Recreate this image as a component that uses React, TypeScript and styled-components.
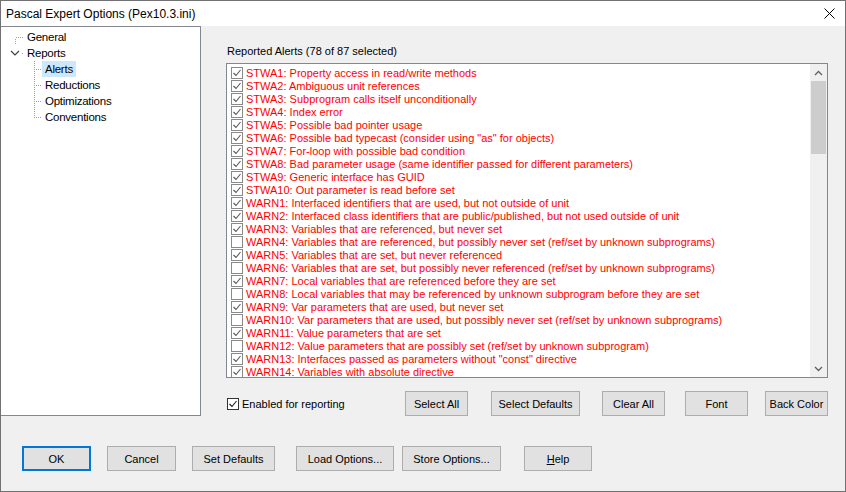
import React from "react";
import styled, { createGlobalStyle } from "styled-components";

const GlobalStyle = createGlobalStyle`
  html, body {
    margin: 0;
    padding: 0;
    background: #ffffff;
  }
  * {
    box-sizing: border-box;
  }
`;

const UI_FONT = `"Liberation Sans", Arial, sans-serif`;

const Window = styled.div`
  width: 846px;
  height: 492px;
  border: 1px solid #717171;
  background: #f0f0f0;
  display: flex;
  flex-direction: column;
  font-family: ${UI_FONT};
  font-size: 11px;
  color: #000;
  overflow: hidden;
`;

const TitleBar = styled.div`
  height: 25px;
  flex: none;
  background: #ffffff;
  display: flex;
  align-items: center;
  justify-content: space-between;
  padding-left: 5px;
  font-size: 12px;
`;

const CloseBox = styled.div`
  width: 32px;
  height: 25px;
  display: flex;
  align-items: center;
  justify-content: center;
`;

const Main = styled.div`
  display: flex;
  height: 390px;
  flex: none;
`;

const TreePanel = styled.div`
  width: 200px;
  flex: none;
  background: #ffffff;
  border-top: 1px solid #828790;
  border-right: 1px solid #828790;
  border-bottom: 1px solid #828790;
  padding-top: 2px;
  font-size: 11.5px;
  letter-spacing: -0.25px;
`;

const TreeRow = styled.div`
  height: 16px;
  display: flex;
  align-items: center;
`;

const TreeLabel = styled.span<{ $selected?: boolean }>`
  padding: 0 3px;
  height: 16px;
  line-height: 16px;
  background: ${(p) => (p.$selected ? "#cce8ff" : "transparent")};
`;

const ContentPane = styled.div`
  flex: 1;
  display: flex;
  flex-direction: column;
  padding: 19px 18px 0 25px;
`;

const GroupLabel = styled.div`
  height: 13px;
  line-height: 13px;
  margin-left: 1px;
`;

const ListBox = styled.div`
  margin-top: 5px;
  height: 315px;
  border: 1px solid #828790;
  background: #ffffff;
  display: flex;
`;

const ListItems = styled.div`
  flex: 1;
  overflow: hidden;
  padding: 2px 0 0 4px;
`;

const ListRow = styled.div`
  height: 13px;
  display: flex;
  align-items: center;
  white-space: nowrap;
  color: #ff0000;
`;

const Box = styled.span<{ $dark?: boolean }>`
  width: 12px;
  height: 12px;
  flex: none;
  border: 1px solid ${(p) => (p.$dark ? "#333333" : "#8a8a8a")};
  background: #ffffff;
  display: flex;
  align-items: center;
  justify-content: center;
  margin-right: 3px;
`;

const ScrollBar = styled.div`
  width: 17px;
  flex: none;
  background: #f0f0f0;
  display: flex;
  flex-direction: column;
`;

const ScrollArrow = styled.div`
  height: 17px;
  display: flex;
  align-items: center;
  justify-content: center;
`;

const ScrollThumb = styled.div`
  height: 73px;
  margin: 0 1px;
  background: #cdcdcd;
`;

const ScrollTrack = styled.div`
  flex: 1;
`;

const ActionRow = styled.div`
  display: flex;
  align-items: center;
  margin-top: 13px;
  height: 25px;
`;

const CheckLabel = styled.label`
  display: flex;
  align-items: center;
  margin-left: 1px;
  width: 178px;
`;

const Button = styled.div<{ $w: number; $ml?: number; $default?: boolean }>`
  width: ${(p) => p.$w}px;
  margin-left: ${(p) => p.$ml ?? 0}px;
  height: 25px;
  flex: none;
  background: #e1e1e1;
  border: ${(p) => (p.$default ? "2px solid #0078d7" : "1px solid #adadad")};
  display: flex;
  align-items: center;
  justify-content: center;
  font-size: 11px;
`;

const Footer = styled.div`
  flex: 1;
  display: flex;
  align-items: flex-start;
  padding: 30px 0 0 21px;
`;

const Underline = styled.span`
  text-decoration: underline;
`;

const Check = ({ dark }: { dark?: boolean }) => (
  <svg width="8" height="8" viewBox="0 0 8 8">
    <polyline
      points="0.5,4 3,6.5 7.5,1"
      fill="none"
      stroke={dark ? "#1a1a1a" : "#555555"}
      strokeWidth="1.1"
    />
  </svg>
);

const CheckBox = ({ checked, dark }: { checked: boolean; dark?: boolean }) => (
  <Box $dark={dark}>{checked && <Check dark={dark} />}</Box>
);

type Gutter = "root-first" | "root-expand" | "child" | "child-last";

const TreeGutter = ({ kind, width }: { kind: Gutter; width: number }) => (
  <svg width={width} height="16" viewBox={`0 0 ${width} 16`} shapeRendering="crispEdges">
    {kind === "root-first" && (
      <g stroke="#a0a0a0" strokeDasharray="1 1" fill="none">
        <line x1="14.5" y1="8.5" x2="23" y2="8.5" />
        <line x1="14.5" y1="9.5" x2="14.5" y2="16" />
      </g>
    )}
    {kind === "root-expand" && (
      <g fill="none">
        <polyline
          points="10,6 14,10 18,6"
          stroke="#404040"
          strokeWidth="1.2"
          shapeRendering="geometricPrecision"
        />
        <line x1="21" y1="8.5" x2="22" y2="8.5" stroke="#a0a0a0" />
      </g>
    )}
    {(kind === "child" || kind === "child-last") && (
      <g stroke="#a0a0a0" strokeDasharray="1 1" fill="none">
        <line x1="33.5" y1="0" x2="33.5" y2={kind === "child" ? 16 : 9} />
        <line x1="34.5" y1="8.5" x2="41" y2="8.5" />
      </g>
    )}
  </svg>
);

const alerts: [string, boolean][] = [
  ["STWA1: Property access in read/write methods", true],
  ["STWA2: Ambiguous unit references", true],
  ["STWA3: Subprogram calls itself unconditionally", true],
  ["STWA4: Index error", true],
  ["STWA5: Possible bad pointer usage", true],
  ['STWA6: Possible bad typecast (consider using "as" for objects)', true],
  ["STWA7: For-loop with possible bad condition", true],
  ["STWA8: Bad parameter usage (same identifier passed for different parameters)", true],
  ["STWA9: Generic interface has GUID", true],
  ["STWA10: Out parameter is read before set", true],
  ["WARN1: Interfaced identifiers that are used, but not outside of unit", true],
  ["WARN2: Interfaced class identifiers that are public/published, but not used outside of unit", true],
  ["WARN3: Variables that are referenced, but never set", true],
  ["WARN4: Variables that are referenced, but possibly never set (ref/set by unknown subprograms)", false],
  ["WARN5: Variables that are set, but never referenced", true],
  ["WARN6: Variables that are set, but possibly never referenced (ref/set by unknown subprograms)", false],
  ["WARN7: Local variables that are referenced before they are set", true],
  ["WARN8: Local variables that may be referenced by unknown subprogram before they are set", false],
  ["WARN9: Var parameters that are used, but never set", true],
  ["WARN10: Var parameters that are used, but possibly never set (ref/set by unknown subprograms)", false],
  ["WARN11: Value parameters that are set", true],
  ["WARN12: Value parameters that are possibly set (ref/set by unknown subprogram)", false],
  ['WARN13: Interfaces passed as parameters without "const" directive', true],
  ["WARN14: Variables with absolute directive", true],
];

export default function App() {
  return (
    <>
      <GlobalStyle />
      <Window>
        <TitleBar>
          <span>Pascal Expert Options (Pex10.3.ini)</span>
          <CloseBox>
            <svg width="11" height="11" viewBox="0 0 11 11">
              <path d="M0.5 0.5 L10.5 10.5 M10.5 0.5 L0.5 10.5" stroke="#000" strokeWidth="1" />
            </svg>
          </CloseBox>
        </TitleBar>
        <Main>
          <TreePanel>
            <TreeRow>
              <TreeGutter kind="root-first" width={23} />
              <TreeLabel>General</TreeLabel>
            </TreeRow>
            <TreeRow>
              <TreeGutter kind="root-expand" width={23} />
              <TreeLabel>Reports</TreeLabel>
            </TreeRow>
            <TreeRow>
              <TreeGutter kind="child" width={41} />
              <TreeLabel $selected>Alerts</TreeLabel>
            </TreeRow>
            <TreeRow>
              <TreeGutter kind="child" width={41} />
              <TreeLabel>Reductions</TreeLabel>
            </TreeRow>
            <TreeRow>
              <TreeGutter kind="child" width={41} />
              <TreeLabel>Optimizations</TreeLabel>
            </TreeRow>
            <TreeRow>
              <TreeGutter kind="child-last" width={41} />
              <TreeLabel>Conventions</TreeLabel>
            </TreeRow>
          </TreePanel>
          <ContentPane>
            <GroupLabel>Reported Alerts (78 of 87 selected)</GroupLabel>
            <ListBox>
              <ListItems>
                {alerts.map(([text, checked]) => (
                  <ListRow key={text}>
                    <CheckBox checked={checked} />
                    <span>{text}</span>
                  </ListRow>
                ))}
              </ListItems>
              <ScrollBar>
                <ScrollArrow>
                  <svg width="9" height="6" viewBox="0 0 9 6">
                    <polyline points="1,5 4.5,1.5 8,5" fill="none" stroke="#606060" strokeWidth="1.3" />
                  </svg>
                </ScrollArrow>
                <ScrollThumb />
                <ScrollTrack />
                <ScrollArrow>
                  <svg width="9" height="6" viewBox="0 0 9 6">
                    <polyline points="1,1 4.5,4.5 8,1" fill="none" stroke="#606060" strokeWidth="1.3" />
                  </svg>
                </ScrollArrow>
              </ScrollBar>
            </ListBox>
            <ActionRow>
              <CheckLabel>
                <CheckBox checked dark />
                <span>Enabled for reporting</span>
              </CheckLabel>
              <Button $w={63}>Select All</Button>
              <Button $w={89} $ml={23}>Select Defaults</Button>
              <Button $w={63} $ml={22}>Clear All</Button>
              <Button $w={63} $ml={20}>Font</Button>
              <Button $w={63} $ml={17}>Back Color</Button>
            </ActionRow>
          </ContentPane>
        </Main>
        <Footer>
          <Button $w={69} $default>OK</Button>
          <Button $w={69} $ml={16}>Cancel</Button>
          <Button $w={83} $ml={16}>Set Defaults</Button>
          <Button $w={98} $ml={21}>Load Options...</Button>
          <Button $w={99} $ml={8}>Store Options...</Button>
          <Button $w={68} $ml={23}>
            <Underline>H</Underline>elp
          </Button>
        </Footer>
      </Window>
    </>
  );
}
